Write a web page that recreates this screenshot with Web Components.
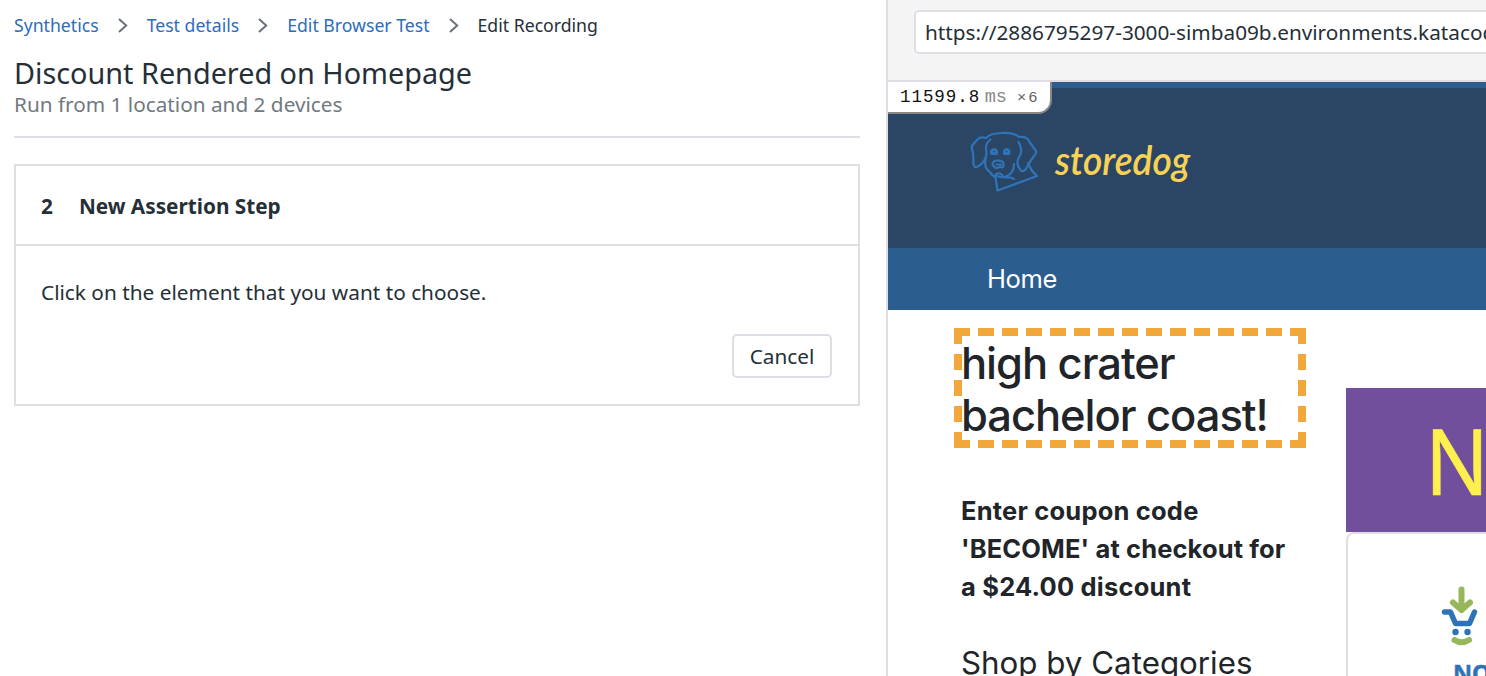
<!DOCTYPE html>
<html lang="en">
<head>
<meta charset="utf-8">
<title>Edit Recording</title>
<style>
body{margin:0;width:1486px;height:676px;overflow:hidden;background:#fff;color:#252f38;font-family:"Noto Sans",sans-serif}
</style>
</head>
<body>
<recorder-app></recorder-app>
<script>
const define = (name, css, html) => {
  const t = document.createElement('template');
  t.innerHTML = `<style>*{box-sizing:border-box}${css}</style>${html}`;
  customElements.define(name, class extends HTMLElement {
    constructor() { super(); this.attachShadow({mode: 'open'}).append(t.content.cloneNode(true)); }
  });
};

define('crumb-trail', `
:host{display:flex;align-items:center;height:24px;font-size:17.650px;line-height:22px;color:#2c6cc0;white-space:nowrap}
span{height:24px}
svg{width:12px;height:18px;margin:0 18px}
.now{color:#252f38}`,
`<span>Synthetics</span><svg viewBox="0 0 12 18"><path d="M2 2 9.200 8.500 2 15" fill="none" stroke="#68717a" stroke-width="2"/></svg><span>Test details</span><svg viewBox="0 0 12 18"><path d="M2 2 9.200 8.500 2 15" fill="none" stroke="#68717a" stroke-width="2"/></svg><span>Edit Browser Test</span><svg viewBox="0 0 12 18"><path d="M2 2 9.200 8.500 2 15" fill="none" stroke="#68717a" stroke-width="2"/></svg><span class="now">Edit Recording</span>`);

define('page-heading', `
:host{display:block;height:100px;border-bottom:2px solid #dedee4;white-space:nowrap}
h1{margin:0;padding-top:15px;font-size:28.800px;font-weight:400;line-height:40px}
p{margin:0;font-size:20.750px;line-height:22px;color:#717980}`,
`<h1><slot></slot></h1><p><slot name="sub"></slot></p>`);

define('plain-button', `
:host{display:block;width:100px;height:44px;border:2px solid #dedee4;border-radius:5px;font-size:20.750px;line-height:41px;text-align:center}`,
`<slot></slot>`);

define('step-card', `
:host{display:block;height:242px;margin-top:26px;border:2px solid #dedee4}
header{height:80px;display:flex;gap:26px;padding-left:25px;align-items:center;border-bottom:2px solid #dedee4;font-size:20.750px;font-weight:700;padding-top:2px}
section{padding:29px 26px 0 25px;font-size:20.800px;line-height:34px}
footer{display:flex;justify-content:flex-end;margin-top:25px}`,
`<header><span>2</span><span><slot name="title"></slot></span></header><section><slot></slot><footer><slot name="action"></slot></footer></section>`);

define('editor-panel', `
:host{display:block;width:886px;flex:none;padding:14px 26px 0 14px}`,
`<crumb-trail></crumb-trail><page-heading>Discount Rendered on Homepage<span slot="sub">Run from 1 location and 2 devices</span></page-heading><step-card><span slot="title">New Assertion Step</span>Click on the element that you want to choose.<plain-button slot="action">Cancel</plain-button></step-card>`);

define('address-bar', `
:host{display:block;height:82px;background:#f4f4f4;border-bottom:2px solid #dedee4;padding:10px 0 0 26px}
div{width:620px;height:44px;background:#fff;border:2px solid #dedee4;border-radius:5px;padding-left:9px;font-size:20.750px;line-height:41px;white-space:nowrap}`,
`<div><slot></slot></div>`);

define('timing-badge', `
:host{position:absolute;left:0;top:0;width:164px;height:32px;background:#fff;border:solid #888;border-width:0 2px 2px 0;border-radius:0 0 14px 0;display:flex;align-items:baseline;padding:2px 0 0 12px;font-family:"Liberation Mono",monospace;line-height:26px;white-space:nowrap}
.n{font-size:17.500px;letter-spacing:.95px;color:#111}.u{font-size:18.500px;color:#888;margin-left:4.500px}.x{font-size:15.500px;letter-spacing:2px;color:#666;margin-left:10px}`,
`<span class="n">11599.8</span><span class="u">ms</span><span class="x">×6</span>`);

define('store-logo', `
:host{display:flex}
svg{width:250px;height:85px;display:block}`,
`<svg viewBox="0 0 250 85"><g fill="none" stroke="#2f73b8" stroke-width="2.200" stroke-linecap="round" stroke-linejoin="round">
<path d="M26 18C31 12 53 11 59 17C65 16 69 19 69.500 22L76 31Q77 33 74 36C71 40 69 44 66.500 48C65 51 62 52 60.500 50C57 46 57 41 59 37C62 34 62 27 58.500 22"/>
<path d="M26 18Q20 16 17 20L12.500 25Q11 27 12.500 31C14 36 13 40 13.500 44Q14 48 17 47C23 44 27 38 26.500 32C25 27 26 23 30.500 19.500"/>
<path d="M26 37C24 44 25 49 30 52Q32 56 35.500 57M35.500 57C35 52 41 52 43.500 57M36 55C41 60 49 55 54 59M54 44C54 51 51 55 45 57"/>
<path d="M35.500 58 37.500 70.500 77 56Q71 51 68 43"/>
<path d="M34 41.500C36 40 42 40 43.500 43C44 46 43 48 41 47C39 46 37 50 34.500 47C32 45 32 43 34 41.500ZM36.500 44.500H41"/>
<path d="M31.500 33.500V31Q34 28 36.500 31V33.500ZM44.500 33.500V31Q47 28 49 31V33.500Z" stroke-width="3"/></g>
<text x="95" y="55" textLength="135" lengthAdjust="spacingAndGlyphs" font-family="Lato,sans-serif" font-style="italic" font-weight="600" font-size="40" fill="#f8d254">storedog</text></svg>`);

define('store-header', `
:host{display:block;position:relative;height:228px;background:#2a4664;border-top:6px solid #2c5d8f}
store-logo{padding:32px 0 0 72px;height:160px}
timing-badge{top:-6px}
nav{height:62px;background:#2c5d8f;color:#fff;font:400 25.500px/62px Inter,sans-serif;letter-spacing:-.4px;padding-left:99px}`,
`<store-logo></store-logo><nav>Home</nav><timing-badge></timing-badge>`);

define('picked-element', `
:host{display:block;width:352px;height:120px;padding:9px 0 0 7px;font:500 43.500px/52px Inter,sans-serif;letter-spacing:-1.050px;white-space:nowrap;
--h:repeating-linear-gradient(90deg,#f2a73b 0 16px,transparent 16px 24px);
--v:repeating-linear-gradient(180deg,#f2a73b 0 16px,transparent 16px 26px);
background:var(--h) 0 0/100% 8px no-repeat,var(--h) 0 100%/100% 8px no-repeat,var(--v) 0 0/8px 100% no-repeat,var(--v) 100% 0/8px 100% no-repeat}`,
`<div>high crater</div><div>bachelor coast!</div>`);

define('promo-column', `
:host{display:block;width:392px;flex:none;padding:18px 0 0 66px;color:#212529;font-family:Inter,sans-serif;white-space:nowrap}
p{margin:44px 0 0 7px;font-size:25.500px;font-weight:650;letter-spacing:.2px;line-height:38px}
.code{letter-spacing:.12px}
h2{margin:36px 0 0 7px;font-size:31.300px;font-weight:400;line-height:42px}`,
`<picked-element></picked-element><p>Enter coupon code<br><span class="code">'BECOME' at checkout for</span><br>a $24.00 discount</p><h2>Shop by Categories</h2>`);

define('product-column', `
:host{display:block;width:206px;flex:none;padding:78px 0 0 66px}
.ad{height:144px;overflow:hidden;background:#714f9d}
.card{width:300px;height:300px;border:2px solid #dfdfdf;border-radius:8px 0 0 0}
svg{display:block}`,
`<div class="ad"><svg width="140" height="144"><text x="79" y="107" font-family="Noto Sans,sans-serif" font-size="92" textLength="64" lengthAdjust="spacingAndGlyphs" fill="#fff04d" stroke="#fff04d" stroke-width=".6">N</text></svg></div>
<div class="card"><svg width="140" height="142" viewBox="0 0 140 142"><g fill="none" stroke-linecap="round" stroke-linejoin="round"><path d="M113.500 55.500V76M105 68.500 113.500 76 122 68.500" stroke="#96b85b" stroke-width="6"/><path d="M96.500 78H102.500L107.500 89.500H121.500L126.500 78" stroke="#2f73b7" stroke-width="5.500"/><path d="M106.500 106Q113.500 110.500 121 106" stroke="#96b85b" stroke-width="6"/></g><circle cx="107.500" cy="98" r="3.200" fill="#2f73b7"/><circle cx="119.500" cy="98" r="3.200" fill="#2f73b7"/><text x="105" y="147.500" font-family="Noto Sans,sans-serif" font-weight="700" font-size="23.500" fill="#2f73b7" stroke="#2f73b7" stroke-width=".5">NO</text></svg></div>`);

define('store-preview', `
:host{display:block;flex:1;min-width:0;border-left:2px solid #dedee4}
main{display:flex;background:#fff}`,
`<address-bar>https://2886795297-3000-simba09b.environments.katacoda.com</address-bar><store-header></store-header><main><promo-column></promo-column><product-column></product-column></main>`);

define('recorder-app', `
:host{display:flex;width:1486px;height:676px;overflow:hidden}`,
`<editor-panel></editor-panel><store-preview></store-preview>`);
</script>
</body>
</html>
